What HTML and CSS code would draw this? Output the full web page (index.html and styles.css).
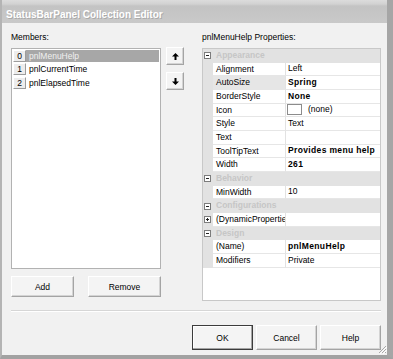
FILE: index.html
```html
<!DOCTYPE html>
<html lang="en">
<head>
    <meta charset="UTF-8">
    <title>StatusBarPanel Collection Editor</title>
    <link rel="stylesheet" href="styles.css">
</head>
<body>
<div class="window">
    <div class="titlebar">StatusBarPanel Collection Editor</div>
    <div class="client">
        <div class="editor">
            <div class="members">
                <div class="label">Members:</div>
                <div class="members-row">
                    <div class="listbox">
                        <div class="item selected"><span class="idx">0</span><span class="name">pnlMenuHelp</span></div>
                        <div class="item"><span class="idx">1</span><span class="name">pnlCurrentTime</span></div>
                        <div class="item"><span class="idx">2</span><span class="name">pnlElapsedTime</span></div>
                    </div>
                    <div class="updown">
                        <button class="btn arrow">
                            <svg width="7" height="7" viewBox="0 0 7 7"><polygon points="3.5,0 7,3.5 4.5,3.5 4.5,7 2.5,7 2.5,3.5 0,3.5" fill="#000"/></svg>
                        </button>
                        <button class="btn arrow">
                            <svg width="7" height="7" viewBox="0 0 7 7"><polygon points="3.5,7 7,3.5 4.5,3.5 4.5,0 2.5,0 2.5,3.5 0,3.5" fill="#000"/></svg>
                        </button>
                    </div>
                </div>
                <div class="add-remove">
                    <button class="btn btn-add">Add</button>
                    <button class="btn btn-remove">Remove</button>
                </div>
            </div>
            <div class="props">
                <div class="label">pnlMenuHelp Properties:</div>
                <div class="pgrid">
                    <div class="prow cat"><span class="margin"><i class="box minus"></i></span><span class="cat-name">Appearance</span></div>
                    <div class="prow"><span class="margin"></span><span class="pname">Alignment</span><span class="pval">Left</span></div>
                    <div class="prow"><span class="margin"></span><span class="pname sel">AutoSize</span><span class="pval b">Spring</span></div>
                    <div class="prow"><span class="margin"></span><span class="pname">BorderStyle</span><span class="pval b">None</span></div>
                    <div class="prow"><span class="margin"></span><span class="pname">Icon</span><span class="pval"><i class="swatch"></i>(none)</span></div>
                    <div class="prow"><span class="margin"></span><span class="pname">Style</span><span class="pval">Text</span></div>
                    <div class="prow"><span class="margin"></span><span class="pname">Text</span><span class="pval"></span></div>
                    <div class="prow"><span class="margin"></span><span class="pname">ToolTipText</span><span class="pval b">Provides menu help</span></div>
                    <div class="prow"><span class="margin"></span><span class="pname">Width</span><span class="pval b">261</span></div>
                    <div class="prow cat"><span class="margin"><i class="box minus"></i></span><span class="cat-name">Behavior</span></div>
                    <div class="prow"><span class="margin"></span><span class="pname">MinWidth</span><span class="pval">10</span></div>
                    <div class="prow cat"><span class="margin"><i class="box minus"></i></span><span class="cat-name">Configurations</span></div>
                    <div class="prow"><span class="margin"><i class="box plus"></i></span><span class="pname">(DynamicProperties)</span><span class="pval"></span></div>
                    <div class="prow cat"><span class="margin"><i class="box minus"></i></span><span class="cat-name">Design</span></div>
                    <div class="prow"><span class="margin"></span><span class="pname">(Name)</span><span class="pval b">pnlMenuHelp</span></div>
                    <div class="prow"><span class="margin"></span><span class="pname">Modifiers</span><span class="pval">Private</span></div>
                </div>
            </div>
        </div>
        <div class="sep"></div>
        <div class="dlg-buttons">
            <button class="btn btn-dlg default">OK</button>
            <button class="btn btn-dlg">Cancel</button>
            <button class="btn btn-dlg">Help</button>
        </div>
        <svg class="grip" width="9" height="9" viewBox="0 0 9 9">
            <path d="M8 1L1 8M8 4L4 8M8 7L7 8" stroke="#a8a8a8" stroke-width="1"/>
            <path d="M9 2L2 9M9 5L5 9" stroke="#ffffff" stroke-width="1"/>
        </svg>
    </div>
</div>
</body>
</html>
```

FILE: styles.css
```css
*{  margin: 0;
    padding: 0;
    box-sizing: border-box;
}
body{
    background: #f1f1f1;
    font-family: "Liberation Sans", Arial, sans-serif;
    font-size: 8.5px;
    color: #000;
}
.window{
    width: 393px;
    height: 359px;
    display: flex;
    flex-direction: column;
    border-left: 2px solid #b4b4b4;
    border-right: 6px solid #a6a6a6;
    border-bottom: 4px solid #a2a2a2;
}
.titlebar{
    height: 23px;
    padding: 8px 0 0 4px;
    line-height: 14px;
    font-size: 10px;
    font-weight: 700;
    color: #fff;
    text-shadow: 1px 1px 0 #aaaaaa;
    background: linear-gradient(to bottom, #dcdcdc 0, #d2d2d2 4px, #c3c3c3 6px, #c9c9c9 100%);
}
.client{
    position: relative;
    flex: 1;
    padding: 9px 6px 5px 9px;
    background: #f1f1f1;
}
.editor{
    display: flex;
    height: 269px;
}
.label{
    height: 11px;
    line-height: 11px;
    margin-bottom: 5px;
}
.members{
    width: 173px;
    display: flex;
    flex-direction: column;
}
.members-row{
    display: flex;
    gap: 5px;
}
.listbox{
    width: 150px;
    height: 221px;
    background: #fff;
    border: 1px solid #b2b2b2;
    padding-top: 1px;
}
.item{
    display: flex;
    height: 13.3px;
    line-height: 12px;
}
.idx{
    width: 13px;
    height: 12px;
    margin-left: 1px;
    text-align: center;
    background: #ededed;
    border-top: 1px solid #fff;
    border-left: 1px solid #fff;
    border-right: 1px solid #9c9c9c;
    border-bottom: 1px solid #9c9c9c;
    line-height: 10px;
}
.name{
    flex: 1;
    height: 12px;
    padding-left: 3px;
    margin-right: 1px;
}
.selected .name{
    background: #a7a7a7;
    color: #f0f0f0;
}
.updown{
    display: flex;
    flex-direction: column;
    gap: 7px;
    margin-top: -1px;
}
.btn{
    font-family: "Liberation Sans", Arial, sans-serif;
    font-size: 8.5px;
    color: #000;
    background: #f4f4f4;
    border: 1px solid #fff;
    border-right-color: #a4a4a4;
    border-bottom-color: #a4a4a4;
    box-shadow: inset -1px -1px 0 #d4d4d4;
}
.arrow{
    width: 18px;
    height: 18px;
    display: flex;
    align-items: center;
    justify-content: center;
}
.add-remove{
    display: flex;
    margin-top: 7px;
}
.btn-add{
    width: 63px;
    height: 21px;
}
.btn-remove{
    width: 73px;
    height: 21px;
    margin-left: 14px;
}
.props{
    width: 179px;
    margin-left: 18px;
}
.pgrid{
    height: 253px;
    background: #fff;
    border: 1px solid #c8c8c8;
}
.prow{
    display: flex;
    height: 13.67px;
    line-height: 13px;
}
.margin{
    width: 10px;
    background: #e2e2e2;
    display: flex;
    align-items: center;
    padding-left: 1px;
}
.cat{
    background: #e2e2e2;
}
.cat-name{
    padding-left: 3px;
    font-weight: 700;
    color: #c6c6c6;
}
.pname{
    width: 73px;
    padding-left: 3px;
    border-right: 1px solid #e2e2e2;
    border-bottom: 1px solid #e6e6e6;
    white-space: nowrap;
    overflow: hidden;
}
.pname.sel{
    background: #e6e6e6;
}
.pval{
    flex: 1;
    padding-left: 2px;
    border-bottom: 1px solid #e6e6e6;
    display: flex;
    align-items: center;
    white-space: nowrap;
}
.pval.b{
    font-weight: 700;
    letter-spacing: 0.35px;
}
.swatch{
    width: 15px;
    height: 11px;
    border: 1px solid #8c8c8c;
    background: #fff;
    margin: 0 6px 0 -1px;
}
.box{
    position: relative;
    width: 7px;
    height: 7px;
    border: 1px solid #7c7c7c;
    background: #fff;
}
.box::before{
    content: "";
    position: absolute;
    left: 1px;
    top: 2px;
    width: 3px;
    height: 1px;
    background: #222;
}
.plus::after{
    content: "";
    position: absolute;
    left: 2px;
    top: 1px;
    width: 1px;
    height: 3px;
    background: #222;
}
.sep{
    height: 2px;
    margin-top: 9px;
    border-top: 1px solid #d6d6d6;
    border-bottom: 1px solid #fff;
}
.dlg-buttons{
    display: flex;
    justify-content: flex-end;
    gap: 3px;
    margin-top: 13px;
}
.btn-dlg{
    width: 61px;
    height: 25px;
}
.default{
    border: 1px solid #3c3c3c;
    box-shadow: inset -1px -1px 0 #a4a4a4, inset 1px 1px 0 #fff;
}
.grip{
    position: absolute;
    right: 0;
    bottom: 1px;
}
```
